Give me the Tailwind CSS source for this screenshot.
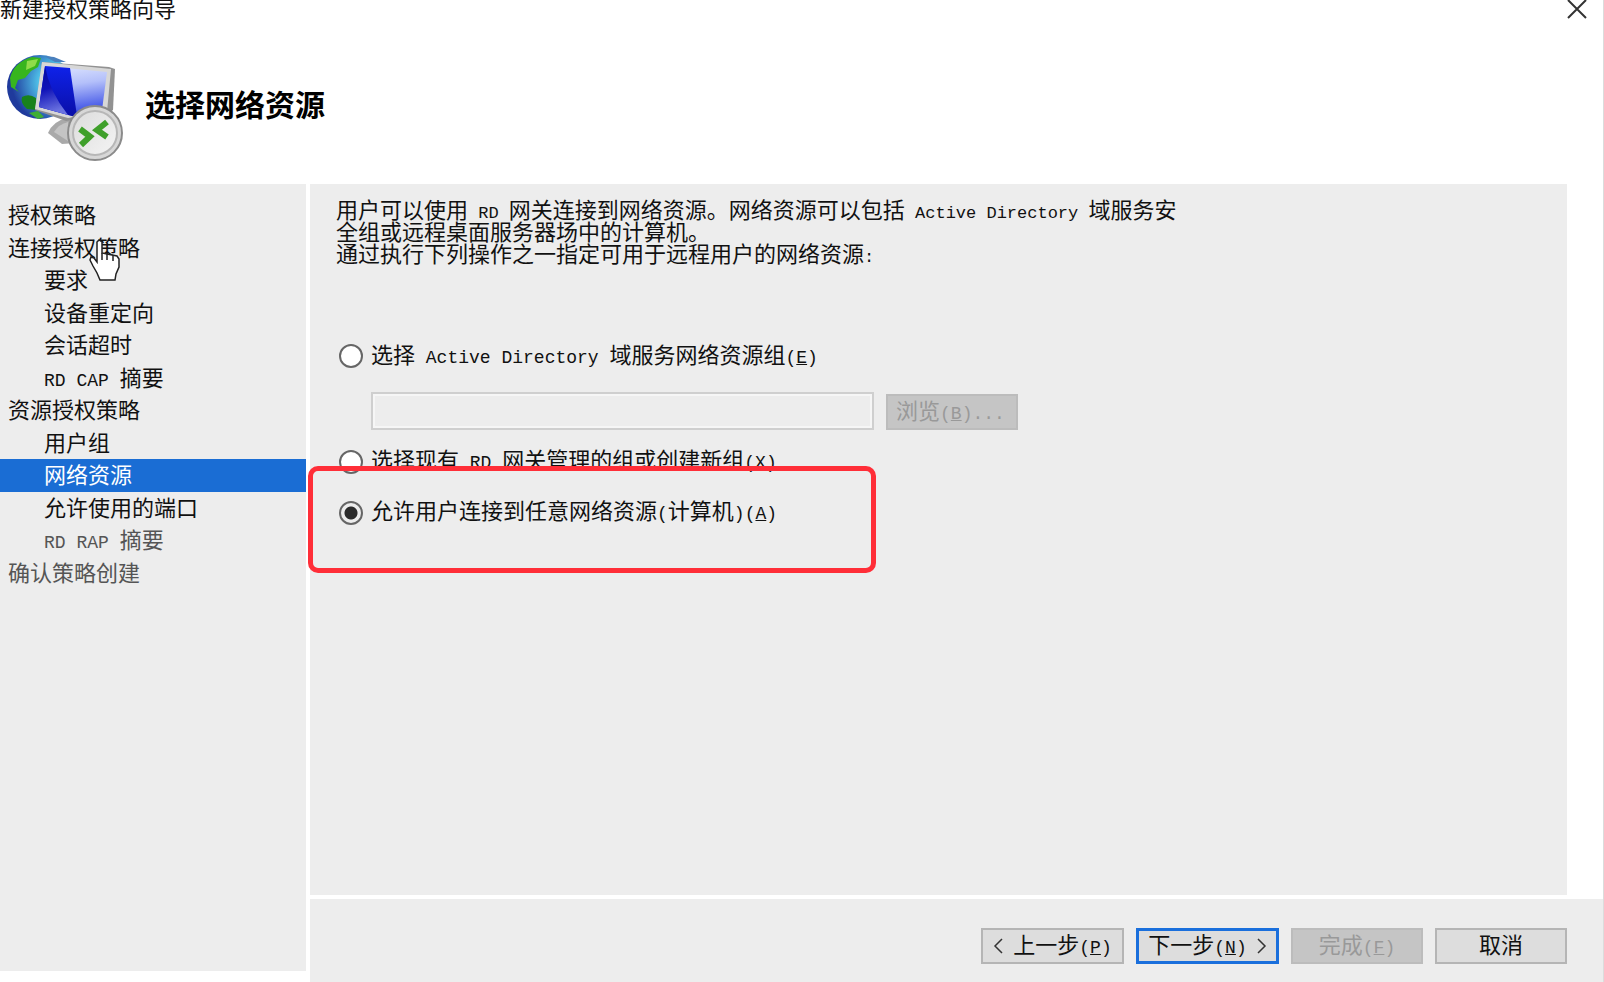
<!DOCTYPE html>
<html lang="zh-Hans">
<head>
  <meta charset="UTF-8">
  <meta name="viewport" content="width=device-width, initial-scale=1.0">
  <title>新建授权策略向导</title>
  <script src="https://cdn.jsdelivr.net/npm/@tailwindcss/browser@4"></script>
</head>
<body class="min-h-screen flex flex-col bg-white border-r border-[#dcdcdc] text-[22px] text-[#111] font-['Liberation_Mono','Noto_Sans_CJK_SC',monospace]">

  <!-- title bar -->
  <header class="h-[184px] flex flex-col">
    <div class="flex justify-between items-start h-6">
      <span class="leading-[24px]">新建授权策略向导</span>
      <button aria-label="关闭" class="mr-4">
        <svg class="w-5 h-5" viewBox="0 0 20 20" fill="none" stroke="#333" stroke-width="2"><path d="M1 0L19 18M19 0L1 18"/></svg>
      </button>
    </div>
    <div class="flex items-center gap-5 pt-[26px]">
      <svg class="w-[125px] h-[115px]" viewBox="0 50 125 115" fill="none" aria-hidden="true">
        <defs>
          <radialGradient id="globe" cx="0.75" cy="0.42" r="0.68">
            <stop offset="0" stop-color="#9ff8fd"/><stop offset="0.4" stop-color="#4fc0e8"/><stop offset="1" stop-color="#1f3a9c"/>
          </radialGradient>
          <linearGradient id="dark" x1="0" y1="0" x2="0.2" y2="1">
            <stop offset="0" stop-color="#0509a0"/><stop offset="0.5" stop-color="#1013b8"/><stop offset="1" stop-color="#6a72e0"/>
          </linearGradient>
          <linearGradient id="blue" x1="0" y1="0" x2="0" y2="1">
            <stop offset="0" stop-color="#0f22ea"/><stop offset="1" stop-color="#0a0fa8"/>
          </linearGradient>
          <linearGradient id="shine" x1="0" y1="0" x2="0.2" y2="1">
            <stop offset="0" stop-color="#e2e9ff"/><stop offset="0.45" stop-color="#b4c0fa"/><stop offset="1" stop-color="#3c50e6"/>
          </linearGradient>
          <linearGradient id="badge" x1="0" y1="0" x2="1" y2="1">
            <stop offset="0" stop-color="#dcdcdc"/><stop offset="1" stop-color="#f4f4f4"/>
          </linearGradient>
        </defs>
        <ellipse cx="40" cy="87" rx="33" ry="32" fill="url(#globe)"/>
        <path d="M10 78Q14 62 32 57L41 58L38 67L31 71L25 78L18 80L15 88L19 92L11 87Z" fill="#37b51e"/>
        <path d="M27 61L38 59L35 66L26 70Z" fill="#8fdc4a"/>
        <path d="M22 97Q29 93 36 98V110L27 109Q20 103 22 97Z" fill="#18821c"/>
        <path d="M29 113L38 111L44 117L38 119Z" fill="#3fae35"/>
        <path d="M44 56L54 57L66 62L55 62Z" fill="#4a80bd"/>
        <path d="M48 133Q53 121 67 118L76 122V143L62 144Z" fill="#a9a9a9"/>
        <path d="M54 132Q59 124 68 122V141Z" fill="#c4c4c4"/>
        <path d="M42 62L109 67L115 69L113 110L107 115L66 121L35 110Z" fill="#929292"/>
        <path d="M42 62L111 69L107 112L68 118L35 109Z" fill="#d7d7d7"/>
        <path d="M45 66L107 72L102 110L72 116L39 107Z" fill="url(#shine)"/>
        <path d="M45 66L70 68L77 116L72 116L39 107Z" fill="url(#blue)"/>
        <path d="M45 66Q49 91 68 115L39 107Z" fill="url(#dark)"/>
        <circle cx="95" cy="133" r="27" fill="#d7d7d7" stroke="#8b8b8b" stroke-width="2"/>
        <circle cx="95" cy="133" r="22" fill="url(#badge)" stroke="#b7b7b7" stroke-width="2"/>
        <path d="M80 129L90 136.500L81 145M107 122L97 130L107 137" stroke="#3fa02b" stroke-width="6"/>
      </svg>
      <h1 class="text-[30px] leading-[40px] font-bold text-black">选择网络资源</h1>
    </div>
  </header>

  <div class="flex-1 flex gap-1">
    <!-- steps -->
    <nav class="relative w-[306px] shrink-0 bg-[#ededed] mb-[11px] pt-[15px]" aria-label="步骤">
      <div class="grid grid-rows-12 h-[390px] leading-[38px]">
        <a href="#" class="pl-2">授权策略</a>
        <a href="#" class="pl-2">连接授权策略</a>
        <a href="#" class="pl-11">要求</a>
        <a href="#" class="pl-11">设备重定向</a>
        <a href="#" class="pl-11">会话超时</a>
        <a href="#" class="pl-11"><span class="text-[18px] leading-none">RD CAP </span>摘要</a>
        <a href="#" class="pl-2">资源授权策略</a>
        <a href="#" class="pl-11">用户组</a>
        <a href="#" class="pl-11 bg-[#1a6dd4] text-white" aria-current="step">网络资源</a>
        <a href="#" class="pl-11">允许使用的端口</a>
        <a href="#" class="pl-11 text-[#555]"><span class="text-[18px] leading-none">RD RAP </span>摘要</a>
        <a href="#" class="pl-2 text-[#555]">确认策略创建</a>
      </div>
      <!-- hand pointer -->
      <svg class="absolute left-[88px] top-[55px] w-[34px] h-[44px]" viewBox="88 239 34 44" aria-hidden="true">
        <path d="M97 242L99 240L102 242V253L107 254L112 255L117 256L119 259V267L116 274L115 280H100L97 273L93 266L90 260L91 257L94 258L97 262Z" fill="#fff" stroke="#222" stroke-width="1.5"/>
        <path d="M102 253V260M107 254V260M113 255V261" stroke="#222" stroke-width="1.5"/>
      </svg>
    </nav>

    <div class="flex-1 flex flex-col gap-1">
      <main class="relative flex-1 bg-[#ededed] mr-9 pl-[26px] pt-[18px]">
        <p class="leading-[22px]">用户可以使用<span class="text-[17px] leading-none"> RD </span>网关连接到网络资源。网络资源可以包括<span class="text-[17px] leading-none"> Active Directory </span>域服务安<br>全组或远程桌面服务器场中的计算机。<br>通过执行下列操作之一指定可用于远程用户的网络资源<span class="text-[17px] leading-none">:</span></p>

        <div class="pl-[3px] pt-[72px]">
          <div class="flex items-center gap-2 h-8">
            <input type="radio" name="res" id="r1" class="appearance-none w-6 h-6 rounded-full border-2 border-[#666] bg-white">
            <label for="r1" class="pt-[3px]">选择<span class="text-[18px] leading-none"> Active Directory </span>域服务网络资源组<span class="text-[18px] leading-none">(<u>E</u>)</span></label>
          </div>
          <div class="flex items-end gap-3 pl-8 mt-[20px]">
            <input type="text" aria-label="网络资源组" disabled class="w-[503px] h-[38px] bg-[#ededed] border-2 border-[#cfcfcf] ring-2 ring-inset ring-[#f6f6f6] px-2">
            <button disabled class="w-[132px] h-9 pl-2 pt-1 bg-[#c5c5c5] border-2 border-[#bcbcbc] text-[#999] text-left leading-none">浏览<span class="text-[18px] leading-none">(<u>B</u>)...</span></button>
          </div>
          <div class="flex items-center gap-2 h-8 mt-4">
            <input type="radio" name="res" id="r2" class="appearance-none w-6 h-6 rounded-full border-2 border-[#666] bg-white">
            <label for="r2">选择现有<span class="text-[18px] leading-none"> RD </span>网关管理的组或创建新组<span class="text-[18px] leading-none">(<u>X</u>)</span></label>
          </div>
          <div class="flex items-center gap-2 h-8 mt-[19px]">
            <input type="radio" name="res" id="r3" checked class="appearance-none w-6 h-6 rounded-full border-2 border-[#666] bg-white checked:bg-[radial-gradient(circle,#2b2b2b_6px,#ededed_7px)]">
            <label for="r3">允许用户连接到任意网络资源<span class="text-[18px] leading-none">(</span>计算机<span class="text-[18px] leading-none">)(<u>A</u>)</span></label>
          </div>
        </div>

        <!-- highlight -->
        <div class="absolute -left-[2px] top-[282px] w-[568px] h-[107px] border-[5px] border-[#ff2e38] rounded-[10px] pointer-events-none"></div>
      </main>

      <footer class="h-[83px] bg-[#ededed] flex items-start justify-end gap-3 pt-[29px] pr-9 leading-none">
        <button class="w-[143px] h-9 bg-[#ddd] border-2 border-[#b5b5b5] flex items-center justify-center gap-2">
          <svg class="w-3 h-4" viewBox="0 0 12 16" fill="none" stroke="#333" stroke-width="1.5"><path d="M9 1L2 8L9 15"/></svg>
          <span class="pt-1">上一步<span class="text-[18px] leading-none">(<u>P</u>)</span></span>
        </button>
        <button class="w-[143px] h-9 bg-[#ddd] border-[3px] border-[#1a6fdc] flex items-center justify-center gap-2">
          <span class="pt-1">下一步<span class="text-[18px] leading-none">(<u>N</u>)</span></span>
          <svg class="w-3 h-4" viewBox="0 0 12 16" fill="none" stroke="#333" stroke-width="1.5"><path d="M3 1L10 8L3 15"/></svg>
        </button>
        <button disabled class="w-[132px] h-9 pt-1 bg-[#c5c5c5] border-2 border-[#bcbcbc] text-[#999]">完成<span class="text-[18px] leading-none">(<u>F</u>)</span></button>
        <button class="w-[132px] h-9 pt-1 bg-[#ddd] border-2 border-[#b5b5b5]">取消</button>
      </footer>
    </div>
  </div>
</body>
</html>
